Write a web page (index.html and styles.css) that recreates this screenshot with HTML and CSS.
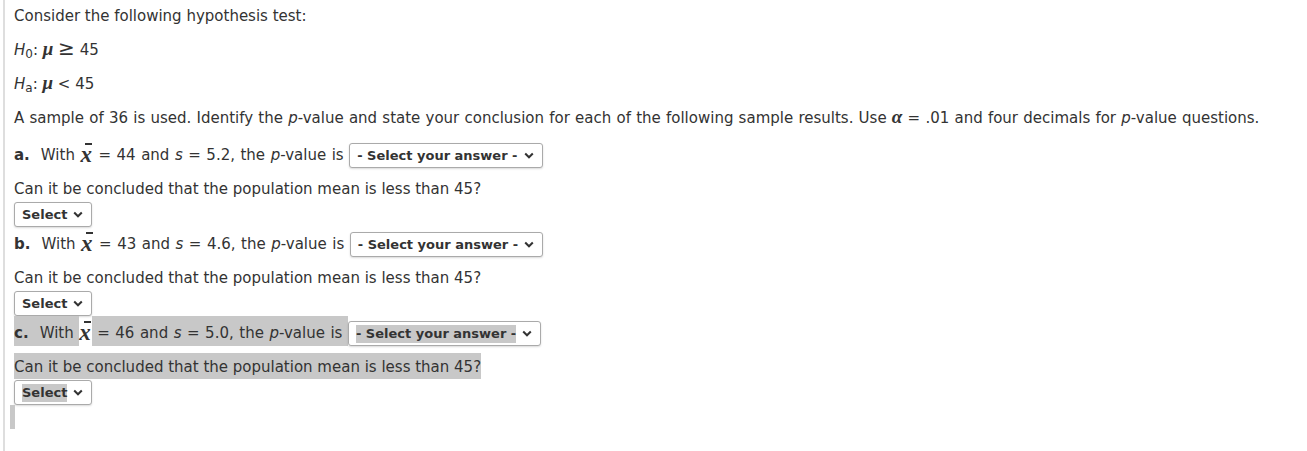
FILE: index.html
```html
<!DOCTYPE html>
<html lang="en">

<head>
    <meta charset="UTF-8">
    <title>Hypothesis Test</title>
    <link rel="stylesheet" href="styles.css">
</head>

<body>
    <div class="page">
        <div class="line">Consider the following hypothesis test:</div>
        <div class="line"><i>H</i><sub>0</sub>: <span class="mu">μ</span> <span class="ge">≥</span> 45</div>
        <div class="line"><i>H</i><sub>a</sub>: <span class="mu">μ</span> &lt; 45</div>
        <div class="line wide">A sample of 36 is used. Identify the <i>p</i>-value and state your conclusion for each of the following sample results. Use <span class="mu">α</span> = .01 and four decimals for <i>p</i>-value questions.</div>

        <div class="q">
            <span class="txt"><b>a.</b>  With </span><span class="xbar">x</span><span class="txt"> = 44 and <i>s</i> = 5.2, the <i>p</i>-value is </span>
            <span class="dd"><span>- Select your answer -</span><svg width="10" height="7" viewBox="0 0 10 7"><path d="M1.2 1.5l3.8 3.8l3.8-3.8" fill="none" stroke="#333" stroke-width="2"/></svg></span>
        </div>
        <div class="ask">Can it be concluded that the population mean is less than 45?</div>
        <div class="dd pick"><span>Select</span><svg width="10" height="7" viewBox="0 0 10 7"><path d="M1.2 1.5l3.8 3.8l3.8-3.8" fill="none" stroke="#333" stroke-width="2"/></svg></div>

        <div class="q">
            <span class="txt"><b>b.</b>  With </span><span class="xbar">x</span><span class="txt"> = 43 and <i>s</i> = 4.6, the <i>p</i>-value is </span>
            <span class="dd"><span>- Select your answer -</span><svg width="10" height="7" viewBox="0 0 10 7"><path d="M1.2 1.5l3.8 3.8l3.8-3.8" fill="none" stroke="#333" stroke-width="2"/></svg></span>
        </div>
        <div class="ask">Can it be concluded that the population mean is less than 45?</div>
        <div class="dd pick"><span>Select</span><svg width="10" height="7" viewBox="0 0 10 7"><path d="M1.2 1.5l3.8 3.8l3.8-3.8" fill="none" stroke="#333" stroke-width="2"/></svg></div>

        <div class="q">
            <span class="txt hl"><b>c.</b>  With </span><span class="xbar">x</span><span class="txt hl"> = 46 and <i>s</i> = 5.0, the <i>p</i>-value is </span>
            <span class="dd"><span class="hl">- Select your answer -</span><svg width="10" height="7" viewBox="0 0 10 7"><path d="M1.2 1.5l3.8 3.8l3.8-3.8" fill="none" stroke="#333" stroke-width="2"/></svg></span>
        </div>
        <div class="ask hl">Can it be concluded that the population mean is less than 45?</div>
        <div class="dd pick"><span class="hl">Select</span><svg width="10" height="7" viewBox="0 0 10 7"><path d="M1.2 1.5l3.8 3.8l3.8-3.8" fill="none" stroke="#333" stroke-width="2"/></svg></div>
        <div class="caret"></div>
    </div>
</body>

</html>
```

FILE: styles.css
```css
* {
    margin: 0;
    padding: 0;
    box-sizing: border-box;
}

body {
    font-family: "DejaVu Sans", Verdana, sans-serif;
    font-size: 15px;
    color: #333;
    background-color: #fff;
}

.page {
    display: flex;
    flex-direction: column;
    align-items: flex-start;
    min-height: 100vh;
    margin-left: 3px;
    border-left: 2px solid #dedede;
    padding: 2px 0 0 9px;
}

.line {
    height: 26px;
    padding-top: 2px;
    line-height: 24px;
    margin-bottom: 8px;
    white-space: nowrap;
}

.wide {
    word-spacing: 0.45px;
}

sub {
    font-size: 12px;
    vertical-align: -3px;
    line-height: 0;
}

.mu {
    font-family: "Liberation Serif", serif;
    font-weight: bold;
    font-style: italic;
    font-size: 19px;
    line-height: 0;
}

.ge {
    font-size: 20px;
    line-height: 0;
}

.q {
    display: flex;
    height: 30px;
    margin-bottom: 7px;
}

.txt {
    height: 30px;
    padding-top: 4px;
    line-height: 26px;
    white-space: pre;
    word-spacing: 0.75px;
}

.xbar {
    position: relative;
    height: 30px;
    padding: 4px 1px 0 0;
    line-height: 26px;
    font-family: "Liberation Serif", serif;
    font-weight: bold;
    font-style: italic;
    font-size: 23px;
}

.xbar::before {
    content: "";
    position: absolute;
    top: 5px;
    left: 5px;
    width: 7px;
    height: 2px;
    background-color: #333;
}

.dd {
    display: flex;
    align-items: center;
    align-self: flex-end;
    height: 25px;
    padding: 0 8px 0 7px;
    border: 1px solid #aaa;
    border-radius: 3px;
    box-shadow: 0 1px 2px rgba(0, 0, 0, 0.15);
    font-weight: bold;
    font-size: 13px;
    background-color: #fff;
}

.dd span {
    line-height: 18px;
}

.dd svg {
    margin-left: 6px;
}

.ask {
    height: 26px;
    padding-top: 2px;
    line-height: 24px;
    white-space: nowrap;
}

.pick {
    align-self: flex-start;
    margin-top: 1px;
}

.hl {
    background-color: #c8c8c8;
}

.caret {
    width: 5px;
    height: 24px;
    margin-left: -4px;
    background-color: #c8c8c8;
}
```
